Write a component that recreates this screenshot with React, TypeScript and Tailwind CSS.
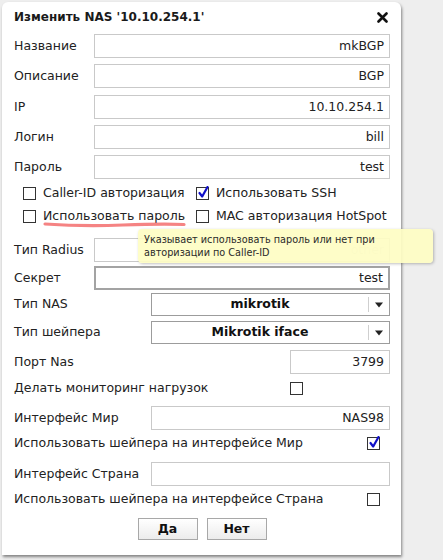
import React from "react";

const font = "font-['DejaVu_Sans','Verdana',sans-serif]";

function TextInput({ value, width = "w-[296px]", strong = false }: { value: string; width?: string; strong?: boolean }) {
  return (
    <div
      className={`${width} h-[24px] flex items-center justify-end pr-[5px] bg-white text-[12.5px] text-[#222] ${
        strong ? "border-2 border-[#a3a3a3]" : "border border-[#c9c9c9]"
      }`}
    >
      {value}
    </div>
  );
}

function Select({ value }: { value: string }) {
  return (
    <div className="w-[239px] h-[23px] flex items-center border border-[#9c9c9c] bg-white">
      <div className="flex-1 text-center font-bold text-[12.5px] text-[#111]">{value}</div>
      <div className="w-px h-[15px] bg-[#cfcfcf]" />
      <div className="w-[20px] flex items-center justify-center">
        <svg width="8" height="6" viewBox="0 0 8 6">
          <path d="M0 0.5 H8 L4 5.5 Z" fill="#222" />
        </svg>
      </div>
    </div>
  );
}

function Checkbox({ checked = false }: { checked?: boolean }) {
  return (
    <div className="relative w-[13px] h-[13px] border border-[#333] bg-white shrink-0">
      {checked && (
        <svg className="absolute -top-[2px] left-[1px]" width="11" height="13" viewBox="0 0 11 13">
          <path d="M1.5 7 L4.2 10.5 L9.5 1" stroke="#1010c8" strokeWidth="2.2" fill="none" strokeLinecap="round" strokeLinejoin="round" />
        </svg>
      )}
    </div>
  );
}

function Row({ label, children, className = "" }: { label: string; children: React.ReactNode; className?: string }) {
  return (
    <div className={`flex items-center justify-between ${className}`}>
      <span>{label}</span>
      {children}
    </div>
  );
}

export default function App() {
  return (
    <div className={`w-[443px] h-[560px] bg-[#eeeeee] overflow-hidden pt-[2px] pl-[2px] ${font}`}>
      <div className="relative w-[399px] h-[553px] bg-white rounded-t-[6px] shadow-[1px_2px_3px_rgba(0,0,0,0.45)] text-[12.5px] text-[#222]">
        <div className="flex items-center justify-between h-[30px] pl-[12px] pr-[13px]">
          <span className="font-bold text-[12px] text-[#1a1a1a]">Изменить NAS '10.10.254.1'</span>
          <svg width="11" height="11" viewBox="0 0 11 11">
            <path d="M1.5 1.5 L9.5 9.5 M9.5 1.5 L1.5 9.5" stroke="#111" strokeWidth="2.6" strokeLinecap="round" />
          </svg>
        </div>

        <div className="flex flex-col pl-[12px] pr-[11px]">
          <Row label="Название" className="mt-[2px]">
            <TextInput value="mkBGP" />
          </Row>
          <Row label="Описание" className="mt-[6px]">
            <TextInput value="BGP" />
          </Row>
          <Row label="IP" className="mt-[7px]">
            <TextInput value="10.10.254.1" />
          </Row>
          <Row label="Логин" className="mt-[6px]">
            <TextInput value="bill" />
          </Row>
          <Row label="Пароль" className="mt-[6px]">
            <TextInput value="test" />
          </Row>

          <div className="mt-[6px] pl-[9px] flex flex-col gap-[7px]">
            <div className="flex items-center h-[16px]">
              <div className="w-[173px] flex items-center gap-[7px]">
                <Checkbox />
                <span>Caller-ID авторизация</span>
              </div>
              <div className="flex items-center gap-[7px]">
                <Checkbox checked />
                <span>Использовать SSH</span>
              </div>
            </div>
            <div className="flex items-center h-[16px]">
              <div className="w-[173px] flex items-center gap-[7px]">
                <Checkbox />
                <span className="relative">
                  Использовать пароль
                  <svg className="absolute left-0 top-[13px]" width="144" height="8" viewBox="0 0 144 8">
                    <path d="M2 4 Q 40 6.5 80 5 T 141 4.5" stroke="#f25a5a" strokeOpacity="0.75" strokeWidth="3.2" fill="none" strokeLinecap="round" />
                  </svg>
                </span>
              </div>
              <div className="flex items-center gap-[7px]">
                <Checkbox />
                <span>MAC авторизация HotSpot</span>
              </div>
            </div>
          </div>

          <Row label="Тип Radius" className="mt-[14px]">
            <div className="w-[296px] h-[24px] flex items-center justify-end pr-[5px] border border-[#c9c9c9] text-[#d6d6d6]">other</div>
          </Row>
          <Row label="Секрет" className="mt-[4px]">
            <TextInput value="test" strong />
          </Row>
          <Row label="Тип NAS" className="mt-[3px]">
            <Select value="mikrotik" />
          </Row>
          <Row label="Тип шейпера" className="mt-[5px]">
            <Select value="Mikrotik iface" />
          </Row>
          <Row label="Порт Nas" className="mt-[6px]">
            <TextInput value="3799" width="w-[100px]" />
          </Row>
          <Row label="Делать мониторинг нагрузок" className="mt-[6px] h-[16px]">
            <div className="w-[100px]">
              <Checkbox />
            </div>
          </Row>
          <Row label="Интерфейс Мир" className="mt-[10px]">
            <TextInput value="NAS98" width="w-[239px]" />
          </Row>
          <Row label="Использовать шейпера на интерфейсе Мир" className="mt-[5px] h-[16px]">
            <div className="mr-[10px]">
              <Checkbox checked />
            </div>
          </Row>
          <Row label="Интерфейс Страна" className="mt-[11px]">
            <TextInput value="" width="w-[239px]" />
          </Row>
          <Row label="Использовать шейпера на интерфейсе Страна" className="mt-[5px] h-[16px]">
            <div className="mr-[10px]">
              <Checkbox />
            </div>
          </Row>

          <div className="mt-[11px] flex justify-center gap-[9px]">
            <button className="w-[60px] h-[22px] border border-[#a8a8a8] bg-gradient-to-b from-white to-[#ececec] font-bold text-[12.5px] text-[#111]">
              Да
            </button>
            <button className="w-[60px] h-[22px] border border-[#a8a8a8] bg-gradient-to-b from-white to-[#ececec] font-bold text-[12.5px] text-[#111]">
              Нет
            </button>
          </div>
        </div>

        <div className="absolute left-[136px] top-[227px] w-[295px] h-[34px] rounded-[4px] bg-[rgba(254,253,196,0.93)] shadow-[1px_1px_3px_rgba(0,0,0,0.25)] pl-[6px] pt-[4px] text-[9.7px] leading-[13px] text-[#2a2a2a]">
          <div>Указывает использовать пароль или нет при</div>
          <div>авторизации по Caller-ID</div>
        </div>
      </div>
    </div>
  );
}
